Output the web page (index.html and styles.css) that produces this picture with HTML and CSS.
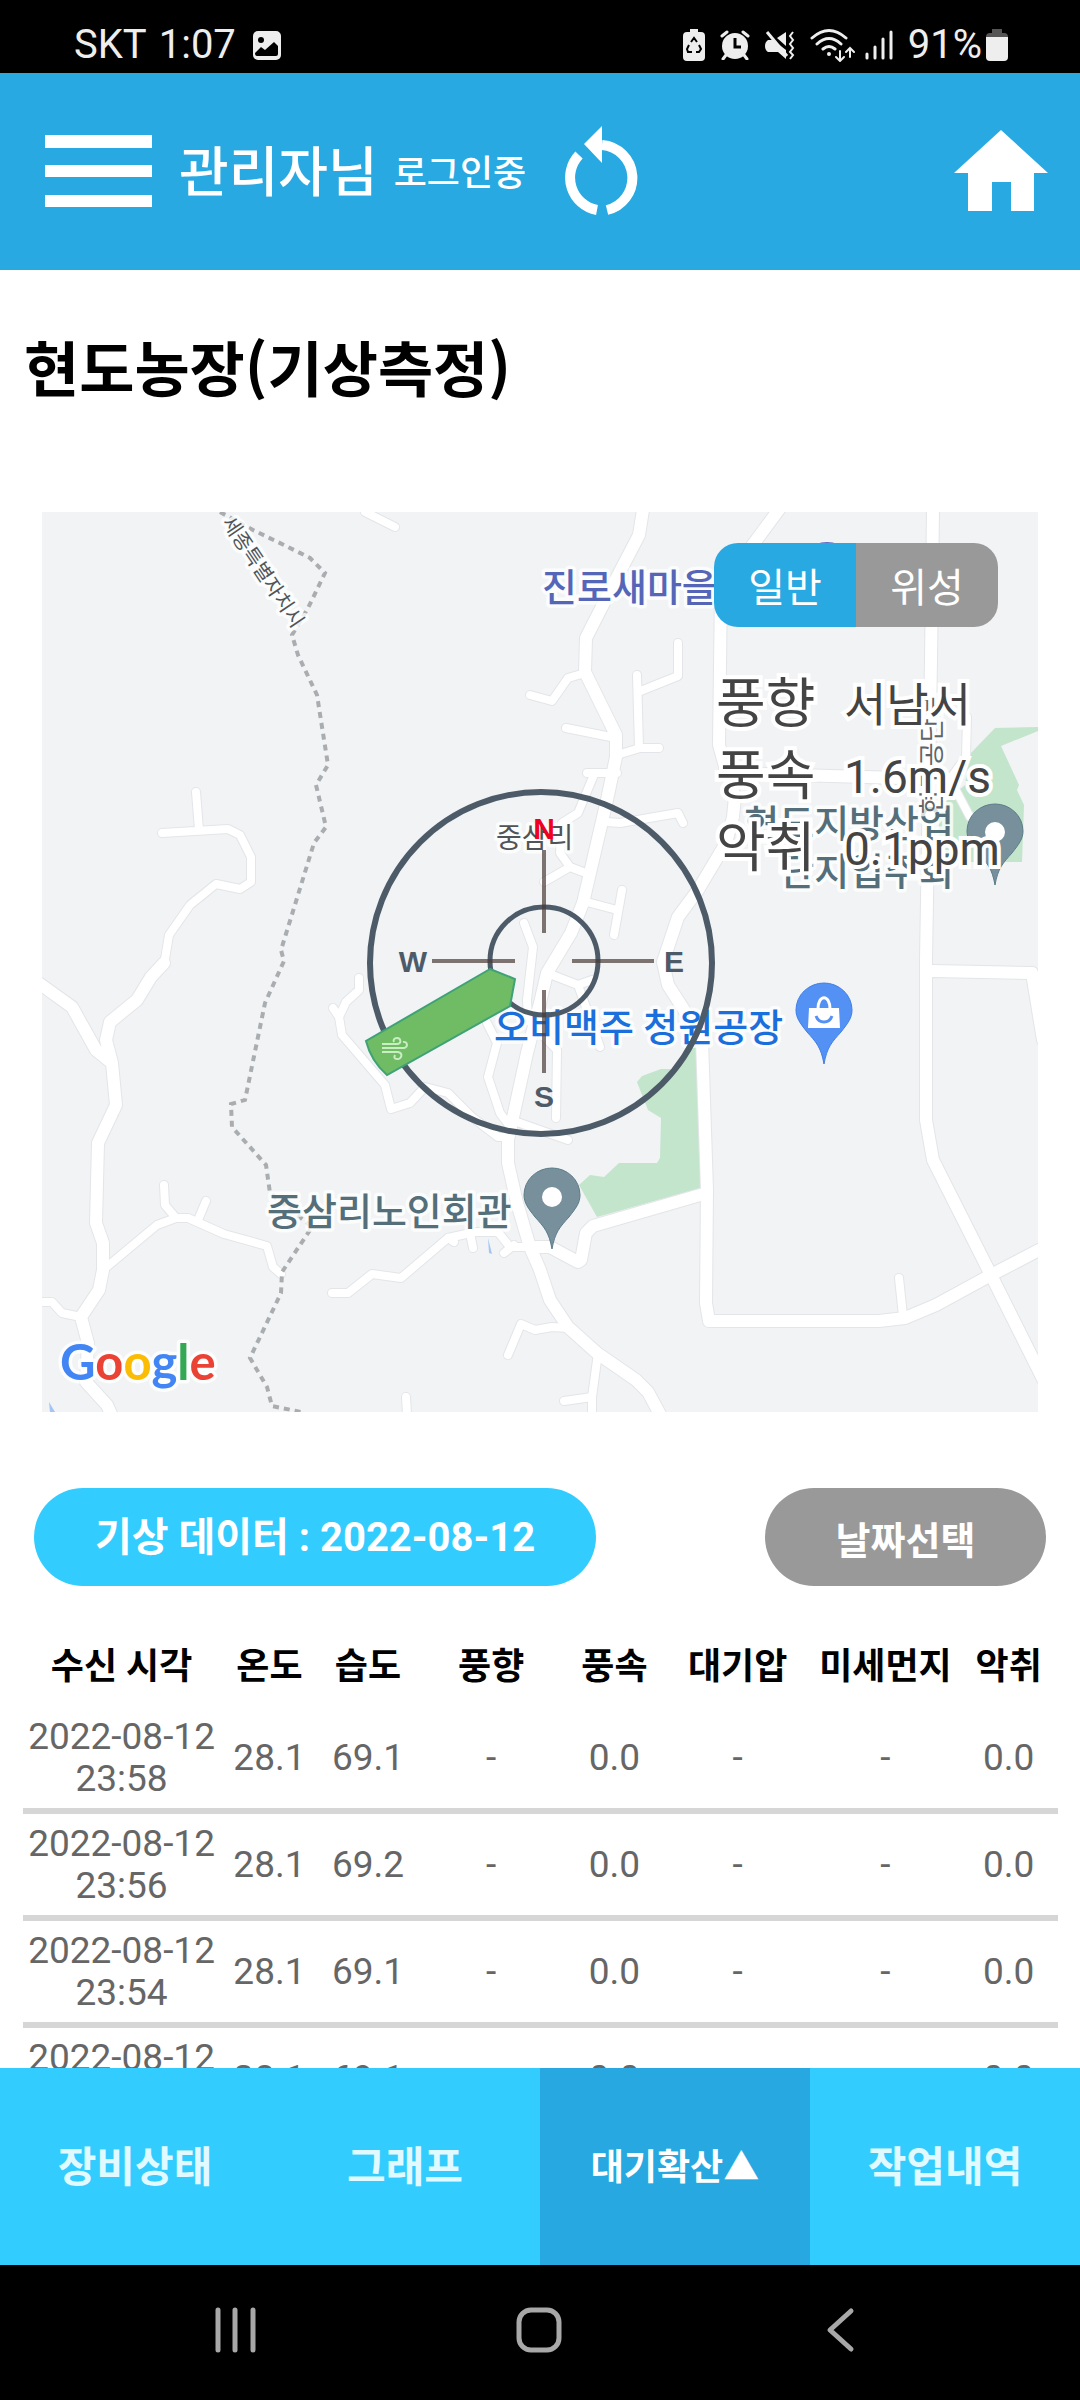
FILE: index.html
```html
<!DOCTYPE html>
<html lang="ko">
<head>
<meta charset="utf-8">
<meta name="viewport" content="width=device-width, initial-scale=1">
<title>현도농장(기상측정)</title>
<link rel="stylesheet" href="styles.css">
</head>
<body>
<div class="app">
  <div class="status">
    <div class="status-group status-left">
      <span class="carrier">SKT</span>
      <span>1:07</span>
      <svg class="status-picture" width="30" height="30" viewBox="0 0 30 30"><rect x="1" y="1" width="28" height="29" rx="5" fill="#eee"/><circle cx="9" cy="10" r="3" fill="#000"/><path d="M3 23l6-6 4 3 9-8 4 4v8q0 2-2 2H5q-2 0-2-3z" fill="#000"/></svg>
    </div>
    <div class="status-group">
      <svg width="22" height="34" viewBox="0 0 22 34"><path d="M7 1h8v3h3q4 0 4 4v21q0 4-4 4H4q-4 0-4-4V8q0-4 4-4h3z" fill="#eee"/><path d="M8 14l3-4 3 4M16 17l2 4-2 3h-3M9 24H5l-1-3 2-4" fill="none" stroke="#000" stroke-width="2"/></svg>
      <svg width="30" height="30" viewBox="0 0 30 30"><circle cx="15" cy="16" r="13" fill="#eee"/><path d="M2 6l5-4M28 6l-5-4M6 25l-3 4M24 25l3 4" stroke="#eee" stroke-width="3" stroke-linecap="round"/><path d="M15 8v9h6" fill="none" stroke="#000" stroke-width="3"/></svg>
      <svg width="30" height="30" viewBox="0 0 30 30"><path d="M3 10h5l13 10v9l-8-7H3q-3-2-3-6t3-6zM21 2v14l-9-8z" fill="#eee"/><path d="M2 2l20 24" stroke="#eee" stroke-width="3"/><path d="M28 2l-3 4 3 4-3 4 3 4-3 4 3 3-3 4" fill="none" stroke="#eee" stroke-width="2"/></svg>
      <div class="status-group status-tight">
        <svg width="45" height="34" viewBox="0 0 45 34"><g fill="none" stroke="#eee" stroke-width="3" stroke-linecap="round"><path d="M2 10q17-15 34 0M7 16q12-11 24 0M13 21q6-5 12 0"/><path d="M30 23v9M26 29l4 4 4-4M40 29v-9M36 24l4-4 4 4" stroke-width="2"/></g><circle cx="19" cy="26" r="2" fill="#eee"/></svg>
        <svg width="28" height="30" viewBox="0 0 28 30"><path d="M2 24v4M10 17v11M18 9v19M26 2v26" stroke="#eee" stroke-width="3" stroke-linecap="round"/></svg>
      </div>
      <div class="status-group status-battery">
        <span>91%</span>
        <svg width="22" height="34" viewBox="0 0 22 34"><path d="M6 1h10v4h2q4 0 4 4H0q0-4 4-4h2z" fill="#555"/><path d="M0 9h22v20q0 4-4 4H4q-4 0-4-4z" fill="#eee"/></svg>
      </div>
    </div>
  </div>

  <header class="header">
    <button class="icon-button" type="button" aria-label="메뉴"><svg width="107" height="72" viewBox="0 0 107 72"><path d="M0 0h107v13H0zM0 30h107v12H0zM0 60h107v12H0z" fill="#fff"/></svg></button>
    <p class="user"><span class="user-name">관리자님</span><span class="user-state">로그인중</span></p>
    <button class="icon-button refresh" type="button" aria-label="새로고침"><svg width="76" height="90" viewBox="564 125 76 90"><path d="M602 125v37l-18-19z" fill="#fff"/><path d="M602 144a33 33 0 0 1 5 65M597 209a33 33 0 0 1-18-55" fill="none" stroke="#fff" stroke-width="10"/></svg></button>
    <a class="home" href="#" aria-label="홈"><svg width="94" height="81" viewBox="0 0 94 81"><path d="M47 0l47 43H80v38H57V52H38v29H14V43H0z" fill="#fff"/></svg></a>
  </header>

  <main class="main">
    <h1 class="title">현도농장(기상측정)</h1>

    <section class="map">
      <svg class="map-canvas" viewBox="42 512 996 900">
        <defs>
          <g id="roads-small">
            <path d="M162 833l66-4 12 6 11 22v25l-11 7-24-5-26 21-21 30-5 30M199 830l-3-38"/>
            <path d="M42 1302h10l10 11 19 4M103 1270l54-45 19-7h12l36 16 43 12 6 21 8 7M176 1218l-11-13-1-20M198 1220l8-19"/>
            <path d="M359 978v12l-13 12-7 15-6-9M339 1017l3 18 43 50 6 24 19-6 15-16 23 6 24 24 26 20h10"/>
            <path d="M524 923l9 24-6 53 1 20 29 30-1 68M487 1023l10 20-9 34 12 36 9 12M547 973l31 12 14-5M578 985l9 25 13 37M517 1122l51 18"/>
            <path d="M587 902l30 8M622 890l-8 45M583 872l-13-5-10-14 2-30 16-10 15-36M587 773h30M570 867l-26 15M607 822l13 1 58-10 5 10"/>
            <path d="M530 695l22 6 16-23 17-5M566 728l50 10M617 755l23-7h19M639 748l-2-73M638 692l40-16v-33"/>
            <path d="M365 512l30 15M899 1278l4 38M568 1328l-16-1-17 3-14-6-13 31M598 1353l-6 44v17M592 1397l-28 4M406 1397l1 17 M470 1233l3 15M504 1253l10-8M448 1238l6 4"/>
            <path d="M332 1293h16l24-19 29 4 47-40 27-6h23l12 15h20"/>
            <path d="M967 717l-1 40-16 22 20 38"/>
          </g>
          <g id="roads-large">
            <path d="M643 510l-4 25-27 52-26 51-1 34 31 63v22l-9 43-24 103-12 30-24 40-7 30-13 50-15 69-4 18v23l9 40 13 44 10 23 10 30 18 27 29 26 39 27 12 12 14 26"/>
            <path d="M780 508l-59 80-2 157 7 25 9 27-2 20-7 26-28 47-20 27-15 45 5 23 18 28 16 27 5 150-1 113 3 18h170l26-3 31-13 55-30 50-26"/>
            <path d="M933 510l-2 150-5 300v160l7 40 58 115 52 104M724 773l176 5h46M933 971l99 2 11 67M707 1193l-114 33-7 7-5 27-3 2-28-15h-20"/>
            <path d="M40 984l32 23 24 43 16 13 4 42-18 38-2 80 7 20v27l-4 20-18 27 7 26-2 39 21 23 5 11M112 1063l-6-23 4-18 27-22 14-23 13-14"/>
          </g>
          <path id="pin" d="M0 82C-3 65-8 60-17 50-24 41-28 36-28 28a28 27 0 0 1 56 0c0 8-4 13-11 22C8 60 3 65 0 82z"/>
        </defs>
        <rect x="42" y="512" width="996" height="900" fill="#f1f3f5"/>
        <path d="M1038 727l-43 1-26 27-4 30-26 22v55h83l2-57-7-15 2-5-18-39 37-15zM698 1045l3 143-104 29-18-32 11-10 14 2 15-14h38l3-5 1-40-13-8-11-28 5-6 19-7h12l15-25z" fill="#c3e5cc"/>
        <path d="M488 1238l4 16-3-1zM49 1402l6 10h-5z" fill="#a3c5f5"/>
        <use class="road small-edge" href="#roads-small"/>
        <use class="road large-edge" href="#roads-large"/>
        <use class="road small-fill" href="#roads-small"/>
        <use class="road large-fill" href="#roads-large"/>
        <path class="boundary" d="M220 512l33 18 33 16 24 12 15 15-17 35-16 27 6 20 19 40 11 70-12 20 10 42-12 16-33 107 3 11-19 42-20 97-14 4 1 23 34 38 4 28 42 34-30 45-1 21-31 65 17 29 5 19 29 6"/>

        <g class="label">
          <text class="small" x="263" y="579" text-anchor="middle" transform="rotate(56 263 572)">세종특별자치시</text>
          <text class="town" x="496" y="848">중삼리</text>
          <text class="place industry" x="954" y="837" text-anchor="end">현도지방산업</text>
          <text class="place industry" x="954" y="885" text-anchor="end">단지입주회</text>
          <text class="street" x="0" y="0" transform="translate(941 814) rotate(-90)">현도공단로</text>
          <text class="place village" x="542" y="601">진로새마을</text>
          <text class="place industry" x="267" y="1225">중삼리노인회관</text>
          <text class="place shop" x="494" y="1041">오비맥주 청원공장</text>
          <text class="google" x="60" y="1380"><tspan fill="#4285f4">G</tspan><tspan fill="#ea4335">o</tspan><tspan fill="#fbbc05">o</tspan><tspan fill="#4285f4">g</tspan><tspan fill="#34a853">l</tspan><tspan fill="#ea4335">e</tspan></text>
        </g>

        <circle cx="827" cy="571" r="29" fill="#5c6bc0"/>
        <g fill="#78909c" stroke="#5b7c89" stroke-width="1">
          <use href="#pin" x="552" y="1167"/>
          <use href="#pin" x="995" y="803"/>
        </g>
        <circle cx="552" cy="1197" r="10" fill="#fff"/>
        <circle cx="995" cy="832" r="10" fill="#fff"/>
        <use href="#pin" x="824" y="982" fill="#5491f5" stroke="#3f7fe8"/>
        <path d="M809 1008h30l1 20h-32z" fill="#fff"/>
        <path d="M818 1009c0-15 12-15 12 0" fill="none" stroke="#fff" stroke-width="3"/>
        <path d="M816 1016c3 8 13 8 16 0" fill="none" stroke="#5491f5" stroke-width="3"/>

        <g fill="none" stroke="#4d5b69">
          <circle cx="541" cy="963" r="171" stroke-width="6"/>
          <circle cx="544" cy="961" r="54" stroke-width="5"/>
        </g>
        <path d="M544 850v83M544 990v83M432 961h83M572 961h82" stroke="#4a3a36" stroke-opacity=".7" stroke-width="4"/>
        <g class="compass">
          <text class="north" x="544" y="839">N</text>
          <text x="544" y="1107">S</text>
          <text x="413" y="972">W</text>
          <text x="674" y="972">E</text>
        </g>
        <path d="M490 969l25 10-5 27-123 69q-16-14-21-34z" fill="#6fbc65" stroke="#3fa277" stroke-width="2"/>
        <path d="M382 1044h15c5 0 4-6 0-6-3 0-4 2-3 4M382 1048h22c5-1 3-7-1-6M382 1052h16c6 1 3 8-1 7-3 0-3-2-2-4" fill="none" stroke="#c9eec2" stroke-width="2"/>
      </svg>

      <div class="map-panel">
        <div class="toggle">
          <button class="toggle-item selected" type="button">일반</button>
          <button class="toggle-item" type="button">위성</button>
        </div>
        <dl class="readings">
          <dt>풍향</dt><dd>서남서</dd>
          <dt>풍속</dt><dd>1.6m/s</dd>
          <dt>악취</dt><dd>0.1ppm</dd>
        </dl>
      </div>
    </section>

    <div class="actions">
      <button class="pill pill-data" type="button">기상 데이터 : 2022-08-12</button>
      <button class="pill pill-date" type="button">날짜선택</button>
    </div>

    <table class="data">
      <colgroup><col class="c4"><col class="c2"><col class="c2"><col class="c3"><col class="c2"><col class="c3"><col class="c3"><col class="c2"></colgroup>
      <thead>
        <tr><th>수신 시각</th><th>온도</th><th>습도</th><th>풍향</th><th>풍속</th><th>대기압</th><th>미세먼지</th><th>악취</th></tr>
      </thead>
      <tbody>
        <tr><td>2022-08-12<br>23:58</td><td>28.1</td><td>69.1</td><td>-</td><td>0.0</td><td>-</td><td>-</td><td>0.0</td></tr>
        <tr><td>2022-08-12<br>23:56</td><td>28.1</td><td>69.2</td><td>-</td><td>0.0</td><td>-</td><td>-</td><td>0.0</td></tr>
        <tr><td>2022-08-12<br>23:54</td><td>28.1</td><td>69.1</td><td>-</td><td>0.0</td><td>-</td><td>-</td><td>0.0</td></tr>
        <tr><td>2022-08-12<br>23:52</td><td>28.1</td><td>69.1</td><td>-</td><td>0.0</td><td>-</td><td>-</td><td>0.0</td></tr>
      </tbody>
    </table>
  </main>

  <nav class="tabs">
    <a class="tab" href="#">장비상태</a>
    <a class="tab" href="#">그래프</a>
    <a class="tab active" href="#">대기확산▲</a>
    <a class="tab" href="#">작업내역</a>
  </nav>

  <div class="system">
    <button class="icon-button" type="button" aria-label="최근 앱"><svg width="46" height="46" viewBox="0 0 46 46"><path d="M5 3v40M22 3v40M40 3v40" stroke="#a8a8a8" stroke-width="5" stroke-linecap="round"/></svg></button>
    <button class="icon-button" type="button" aria-label="홈 화면"><svg width="46" height="46" viewBox="0 0 46 46"><rect x="3" y="3" width="40" height="40" rx="12" fill="none" stroke="#a8a8a8" stroke-width="5"/></svg></button>
    <button class="icon-button" type="button" aria-label="뒤로"><svg width="46" height="46" viewBox="0 0 46 46"><path d="M33 4L12 23l21 19" fill="none" stroke="#a8a8a8" stroke-width="5" stroke-linecap="round" stroke-linejoin="round"/></svg></button>
  </div>
</div>
</body>
</html>
```

FILE: styles.css
```css
* {
  box-sizing: border-box;
}

body {
  margin: 0;
  background: #fff;
  font-family: Roboto, "Noto Sans CJK KR", sans-serif;
}

button {
  margin: 0;
  padding: 0;
  border: 0;
  background: none;
  color: inherit;
  font: inherit;
}

svg {
  display: block;
}

.app {
  display: flex;
  flex-direction: column;
  height: 100vh;
}

/* Device status bar */
.status {
  display: flex;
  flex: none;
  justify-content: space-between;
  padding: 21px 72px 4px 74px;
  background: #000;
  color: #eee;
  font-size: 40px;
  line-height: 48px;
}

.status-group {
  display: flex;
  align-items: center;
  gap: 15px;
}

.status-left {
  gap: 12px;
}

.status-picture {
  margin-left: 4px;
}

.status-tight {
  gap: 10px;
}

.status-battery {
  gap: 4px;
}

/* App header */
.header {
  display: flex;
  flex: none;
  align-items: center;
  height: 197px;
  padding: 0 32px 2px 45px;
  background: #29a9e1;
  color: #fff;
}

.user {
  display: flex;
  align-items: center;
  gap: 16px;
  margin: 0 38px 0 27px;
  padding-top: 6px;
  font-weight: 500;
}

.user-name {
  font-size: 54px;
  line-height: 64px;
}

.user-state {
  font-size: 36px;
  line-height: 64px;
}

.home {
  margin-left: auto;
}

.main {
  flex: 1;
  min-height: 0;
  overflow: hidden;
}

.title {
  margin: 0;
  padding: 60px 24px 110px;
  color: #000;
  font-family: "Noto Sans CJK KR", sans-serif;
  font-size: 60px;
  font-weight: 700;
  line-height: 72px;
}

/* Map */
.map {
  position: relative;
  margin: 0 42px;
}

.map-canvas {
  width: 100%;
}

.road {
  fill: none;
  stroke-linecap: round;
  stroke-linejoin: round;
}

.small-edge {
  stroke: #e3e5e8;
  stroke-width: 10px;
}

.large-edge {
  stroke: #e3e5e8;
  stroke-width: 14px;
}

.small-fill {
  stroke: #fff;
  stroke-width: 8px;
}

.large-fill {
  stroke: #fff;
  stroke-width: 12px;
}

.boundary {
  fill: none;
  stroke: #aaadb0;
  stroke-width: 4px;
  stroke-dasharray: 6 5;
}

.label text {
  paint-order: stroke;
  stroke: #fff;
  stroke-opacity: .8;
  stroke-width: 7px;
  stroke-linejoin: round;
}

.small {
  fill: #505458;
  font-size: 20px;
}

.town {
  fill: #505458;
  font-size: 28px;
}

.street {
  fill: #606468;
  font-size: 26px;
}

.place {
  font-size: 38px;
  font-weight: 500;
}

.industry {
  fill: #546e7a;
}

.village {
  fill: #5566b8;
}

.shop {
  fill: #1a6fdc;
}

.label .google {
  font-family: Lato, sans-serif;
  font-size: 49px;
  font-weight: 700;
}

.compass {
  fill: #4d5b69;
  font-family: "Liberation Sans", sans-serif;
  font-size: 30px;
  font-weight: 700;
  text-anchor: middle;
}

.north {
  fill: #f00020;
}

.map-panel {
  position: absolute;
  top: 31px;
  right: 40px;
  width: 284px;
}

.toggle {
  display: flex;
  overflow: hidden;
  border-radius: 24px;
}

.toggle-item {
  flex: 1;
  height: 84px;
  background: #999;
  color: #fff;
  font-size: 40px;
}

.toggle-item.selected {
  background: #29a9e1;
}

.readings {
  display: grid;
  grid-template-columns: 128px auto;
  grid-auto-rows: 72px;
  align-items: center;
  margin: 42px 0 0 2px;
  color: #444;
  font-size: 46px;
  line-height: 72px;
  white-space: nowrap;
  paint-order: stroke fill;
  -webkit-text-stroke: 8px #fff;
}

.readings dt {
  font-size: 54px;
}

.readings dd {
  margin: 0;
}

/* Data section */
.actions {
  display: flex;
  gap: 169px;
  margin: 76px 34px 36px;
}

.pill {
  height: 98px;
  border-radius: 49px;
  color: #fff;
  font-size: 38px;
  font-weight: 700;
}

.pill-data {
  flex: 2;
  padding-bottom: 6px;
  background: #33ccff;
  font-size: 40px;
}

.pill-date {
  flex: 1;
  background: #999;
}

.data {
  width: calc(100% - 45px);
  margin: 0 22px 0 23px;
  border-spacing: 0;
  table-layout: fixed;
  color: #666;
  font-size: 37px;
  line-height: 42px;
  text-align: center;
}

.c2 {
  width: calc(100% * 2 / 21);
}

.c3 {
  width: calc(100% * 3 / 21);
}

.c4 {
  width: calc(100% * 4 / 21);
}

.data th {
  height: 85px;
  padding: 4px 0 0;
  color: #000;
  font-size: 36px;
  font-weight: 700;
  white-space: nowrap;
}

.data td {
  padding: 9px 0 8px;
  border-bottom: 6px solid #d6d6d6;
}

/* Bottom tabs */
.tabs {
  display: flex;
  flex: none;
}

.tab {
  display: flex;
  flex: 1;
  align-items: center;
  justify-content: center;
  height: 197px;
  padding-bottom: 6px;
  background: #33ccff;
  color: #e0faff;
  font-size: 42px;
  font-weight: 700;
  text-decoration: none;
}

.tab.active {
  background: #27a8e1;
  color: #fff;
  font-size: 36px;
}

/* Device navigation keys */
.system {
  display: flex;
  flex: none;
  align-items: center;
  justify-content: space-between;
  height: 135px;
  padding: 0 216px 6px 213px;
  background: #000;
}
```
